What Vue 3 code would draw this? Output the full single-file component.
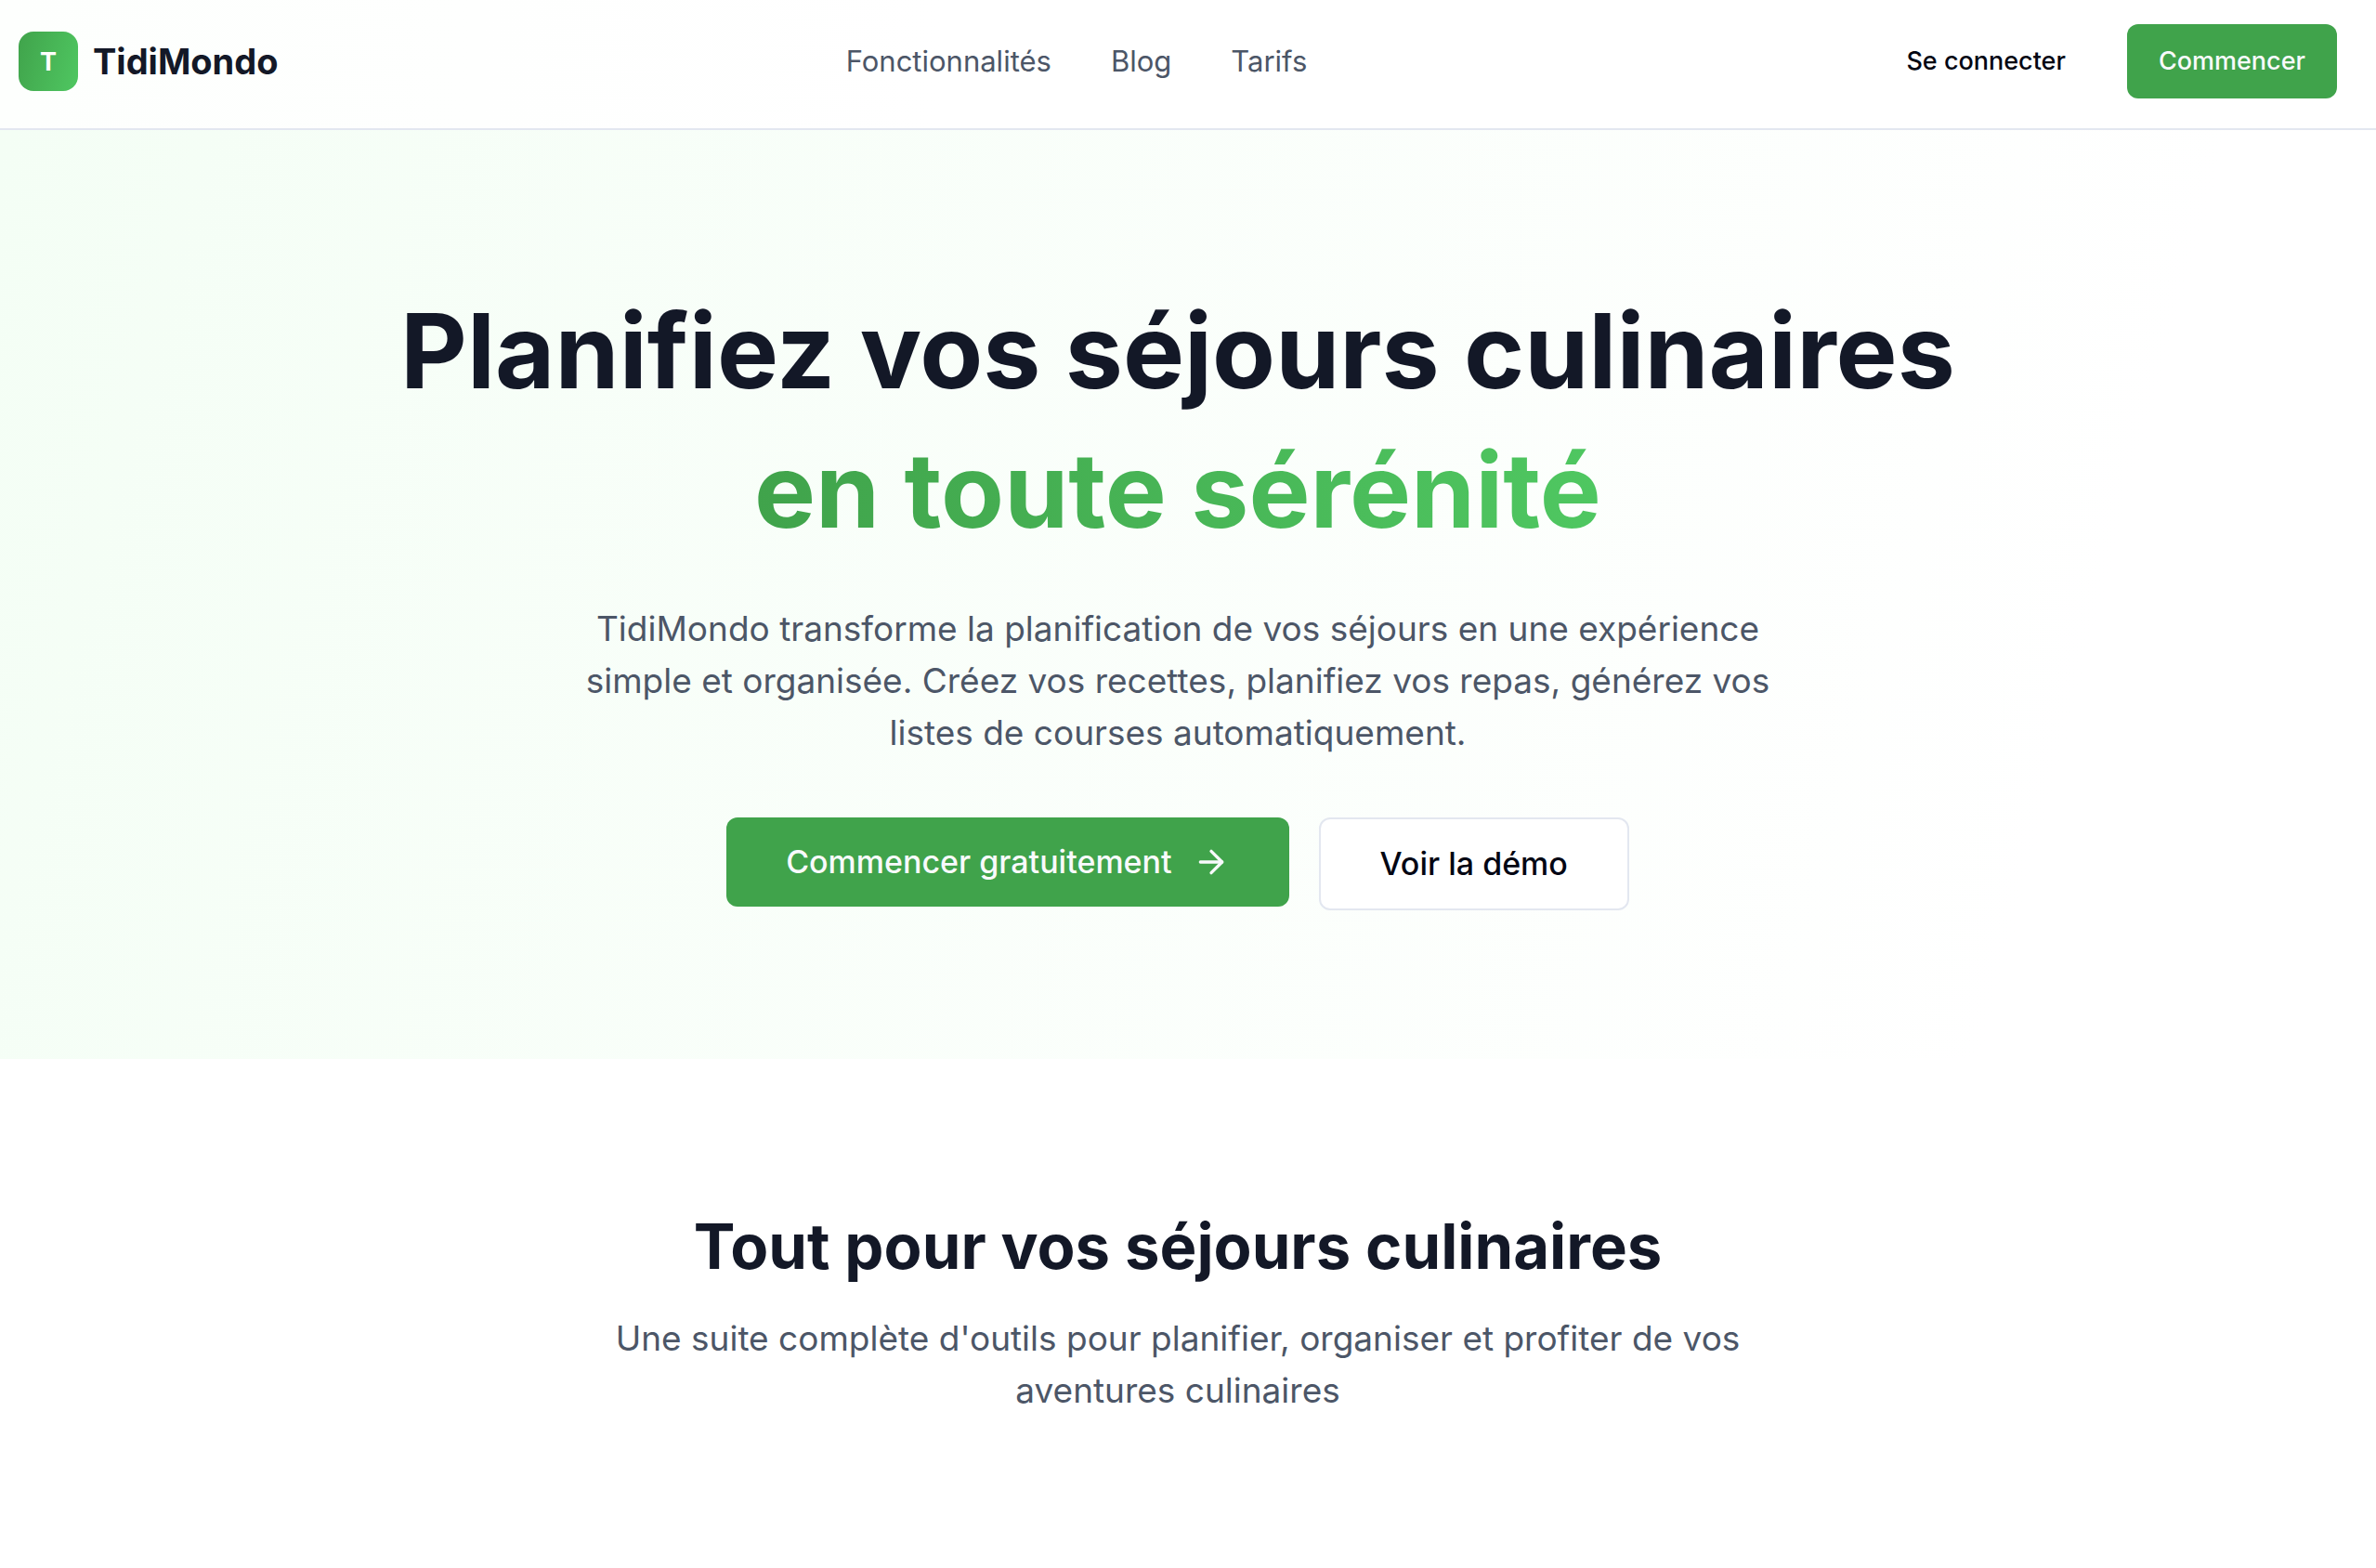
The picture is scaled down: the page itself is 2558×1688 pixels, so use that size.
<script setup>
const links = [
  { label: 'Fonctionnalités', href: '#fonctionnalites' },
  { label: 'Blog', href: '#blog' },
  { label: 'Tarifs', href: '#tarifs' },
]
</script>

<template>
  <div class="page">
    <header class="header">
      <a class="brand" href="#accueil">
        <span class="brand-mark" aria-hidden="true">T</span>
        <span class="brand-name">TidiMondo</span>
      </a>
      <nav class="nav" aria-label="Navigation principale">
        <a v-for="link in links" :key="link.label" :href="link.href">{{ link.label }}</a>
      </nav>
      <div class="actions">
        <button type="button" class="btn btn-ghost">Se connecter</button>
        <button type="button" class="btn btn-primary">Commencer</button>
      </div>
    </header>

    <main>
      <section class="hero">
        <h1>
          Planifiez vos séjours culinaires
          <br />
          <span class="accent">en toute sérénité</span>
        </h1>
        <p class="lead">
          TidiMondo transforme la planification de vos séjours en une expérience simple et
          organisée. Créez vos recettes, planifiez vos repas, générez vos listes de courses
          automatiquement.
        </p>
        <div class="cta">
          <button type="button" class="btn btn-large btn-primary">
            Commencer gratuitement
            <svg viewBox="0 0 24 24" aria-hidden="true">
              <path d="M5 12h14" />
              <path d="m12 5 7 7-7 7" />
            </svg>
          </button>
          <button type="button" class="btn btn-large btn-outline">Voir la démo</button>
        </div>
      </section>

      <section class="features" id="fonctionnalites">
        <h2>Tout pour vos séjours culinaires</h2>
        <p class="lead">
          Une suite complète d'outils pour planifier, organiser et profiter de vos aventures
          culinaires
        </p>
      </section>
    </main>
  </div>
</template>

<style>
body {
  margin: 0;
  background: #fff;
}
</style>

<style scoped>
.page {
  --green: #40a34b;
  --green-light: #4fc761;
  --ink: #131827;
  --muted: #4c5667;
  --line: #e3e7f0;
  --gutter: 22px;
  min-height: 100vh;
  font-family: Inter, "Liberation Sans", sans-serif;
  color: var(--ink);
}

.header {
  display: flex;
  align-items: center;
  justify-content: space-between;
  padding: 26px calc(var(--gutter) + 20px) 32px 20px;
  border-bottom: 2px solid var(--line);
  background: linear-gradient(90deg, #fdfffd, #fff 40%);
}

.brand {
  display: flex;
  align-items: center;
  gap: 16px;
  color: inherit;
  text-decoration: none;
}

.brand-mark {
  display: flex;
  align-items: center;
  justify-content: center;
  width: 64px;
  height: 64px;
  border-radius: 16px;
  background: linear-gradient(105deg, var(--green), var(--green-light));
  color: #fff;
  font-size: 27px;
  font-weight: 700;
}

.brand-name {
  font-size: 38px;
  font-weight: 700;
  line-height: 56px;
}

.nav {
  display: flex;
  gap: 64px;
}

.nav a {
  color: var(--muted);
  font-size: 31px;
  line-height: 48px;
  text-decoration: none;
}

.actions {
  display: flex;
  gap: 32px;
}

.btn {
  display: inline-flex;
  align-items: center;
  justify-content: center;
  gap: 22px;
  padding: 20px 34px;
  border: 0;
  border-radius: 12px;
  font-family: inherit;
  font-size: 27px;
  font-weight: 500;
  line-height: 40px;
  white-space: nowrap;
  cursor: pointer;
}

.btn-large {
  padding: 20px 64px;
  font-size: 34px;
  line-height: 56px;
}

.btn-ghost {
  background: transparent;
  color: #030613;
}

.btn-primary {
  background: var(--green);
  color: #f8fafc;
}

.btn-outline {
  border: 2px solid var(--line);
  background: #fff;
  color: #030613;
}

.btn svg {
  width: 40px;
  height: 40px;
  fill: none;
  stroke: currentColor;
  stroke-width: 2;
  stroke-linecap: round;
  stroke-linejoin: round;
}

.hero,
.features {
  display: flex;
  flex-direction: column;
  align-items: center;
  text-align: center;
}

.hero {
  padding: 163px var(--gutter) 160px 0;
  background: linear-gradient(105deg, #f4fef5, #fff 85%);
}

h1,
h2,
p {
  margin: 0;
}

h1 {
  font-size: 111px;
  font-weight: 700;
  line-height: 150px;
}

.accent {
  background: linear-gradient(90deg, var(--green), var(--green-light));
  background-clip: text;
  color: transparent;
}

.lead {
  max-width: 1344px;
  color: var(--muted);
  font-size: 37px;
  line-height: 56px;
}

.hero .lead {
  margin-top: 46px;
}

.cta {
  display: flex;
  align-items: flex-start;
  gap: 32px;
  margin-top: 63px;
}

.features {
  padding: 162px var(--gutter) 160px 0;
}

h2 {
  font-size: 67px;
  font-weight: 700;
  line-height: 80px;
}

.features .lead {
  margin-top: 31px;
}
</style>
